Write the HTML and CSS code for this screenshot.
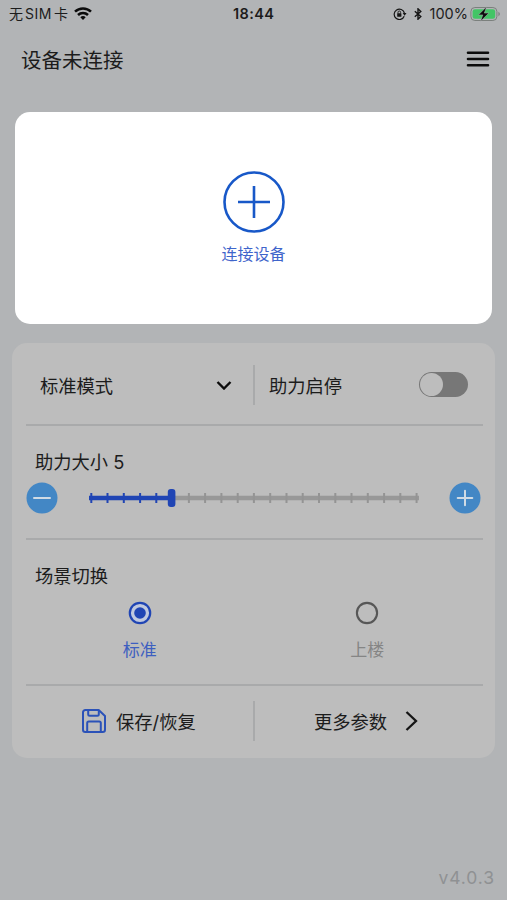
FILE: index.html
```html
<!DOCTYPE html>
<html lang="zh-CN">
  <head>
    <meta charset="UTF-8" />
    <meta name="viewport" content="width=device-width, initial-scale=1.0" />
    <title>设备未连接</title>
    <link rel="stylesheet" href="styles.css">
  </head>

  <body>
    <!-- Status bar -->
    <div class="status">
      <div class="status-left">
        <span class="carrier">无<span class="sim">SIM</span>卡</span>
        <svg class="wifi" width="18" height="13" viewBox="0 0 18 13" fill="none" stroke="#0b0b0b" stroke-width="2.5">
          <path d="M1 4.7a11.5 11.5 0 0 1 16 0" />
          <path d="M4 8a7.2 7.2 0 0 1 10 0" />
          <path d="M9 13L6.3 10.2a3.9 3.9 0 0 1 5.4 0z" fill="#0b0b0b" stroke="none" />
        </svg>
      </div>
      <span class="clock">18:44</span>
      <div class="status-right">
        <svg width="14" height="12" viewBox="0 0 14 12" fill="none" stroke="#151515" stroke-width="1.2">
          <path d="M11.2 8.2A5.2 5.2 0 1 1 11.4 5" />
          <path d="M9.7 5h3.8l-1.9 2.7z" fill="#151515" stroke="none" />
          <rect x="4.2" y="5.3" width="4.2" height="3.4" rx="0.5" fill="#151515" stroke="none" />
          <path d="M5 5.5V4.3a1.3 1.3 0 0 1 2.6 0v1.2" stroke-width="0.9" />
        </svg>
        <svg class="bluetooth" width="8" height="12" viewBox="0 0 8 12" fill="none" stroke="#151515" stroke-width="1.4">
          <path d="M0.8 3.2l6 5.4L4 11.2V0.8l2.8 2.6-6 5.4" />
        </svg>
        <span class="percent">100%</span>
        <svg class="battery" width="31" height="16" viewBox="0 0 31 16">
          <rect x="0.9" y="1.5" width="26" height="13" rx="4" fill="none" stroke="#7b807d" />
          <rect x="2.6" y="3.2" width="22.6" height="9.6" rx="2.4" fill="#42c565" />
          <path d="M28.4 5.8v4.400c2-.8 2-3.600 0-4.400z" fill="#7b807d" />
          <path d="M16.600 0.800L8.400 8.900h4.400l-2.200 6.300 8.200-8.100h-4.500z" fill="#0b0b0b" stroke="#b2b4b6" stroke-width="0.5" />
        </svg>
      </div>
    </div>

    <!-- Page header -->
    <div class="header">
      <h1>设备未连接</h1>
      <svg width="24" height="16" viewBox="0 0 24 16" stroke="#0c0c0c" stroke-width="2.6" stroke-linecap="round">
        <path d="M2 1.8h20M2 8h20M2 14.2h20" />
      </svg>
    </div>

    <!-- Connect card -->
    <div class="connect">
      <svg width="64" height="64" viewBox="0 0 64 64" fill="none" stroke="#1858c8" stroke-width="2.6">
        <circle cx="32" cy="32" r="29.5" />
        <path d="M32 16v32M16 32h32" />
      </svg>
      <span>连接设备</span>
    </div>

    <!-- Control panel -->
    <div class="panel">
      <div class="row mode">
        <div class="mode-select">
          <span>标准模式</span>
          <svg width="16" height="10" viewBox="0 0 16 10" fill="none" stroke="#0c0c0c" stroke-width="2.4">
            <path d="M1.500 2L8 8.500l6.500-6.500" />
          </svg>
        </div>
        <div class="mode-switch">
          <span>助力启停</span>
          <div class="switch"><div class="knob"></div></div>
        </div>
      </div>

      <div class="row power">
        <span class="label">助力大小 5</span>
        <div class="power-bar">
          <svg width="32" height="32" viewBox="0 0 32 32" stroke="#d0dbe5" stroke-width="2" stroke-linecap="round">
            <circle cx="16" cy="16" r="15.5" fill="#4387c5" stroke="none" />
            <path d="M8 16h16" />
          </svg>
          <svg width="332" height="20" viewBox="0 0 332 20">
            <path d="M84 10h247" stroke="#989898" stroke-width="4.4" />
            <path d="M100.9 5v10M117.1 5v10M133.4 5v10M149.7 5v10M165.9 5v10M182.2 5v10M198.5 5v10M214.7 5v10M231 5v10M247.3 5v10M263.5 5v10M279.8 5v10M296.1 5v10M312.3 5v10M328.6 5v10" stroke="#949494" stroke-width="2" />
            <path d="M1 10h83" stroke="#2045b4" stroke-width="4.4" />
            <path d="M3.3 5v10M19.5 5v10M35.8 5v10M52.1 5v10M68.3 5v10" stroke="#2045b4" stroke-width="2" />
            <rect x="79.8" y="1" width="7.6" height="18" rx="3" fill="#2045b4" />
          </svg>
          <svg width="32" height="32" viewBox="0 0 32 32" stroke="#d0dbe5" stroke-width="2" stroke-linecap="round">
            <circle cx="16" cy="16" r="15.5" fill="#4387c5" stroke="none" />
            <path d="M8.7 16h14.6M16 8.7v14.6" />
          </svg>
        </div>
      </div>

      <div class="row scene">
        <span class="label">场景切换</span>
        <div class="scene-list">
          <div class="scene-item active">
            <svg width="24" height="24" viewBox="0 0 24 24">
              <circle cx="12" cy="12" r="10.2" fill="#c0c9df" stroke="#2045b4" stroke-width="2.2" />
              <circle cx="12" cy="12" r="5.8" fill="#2045b4" />
            </svg>
            <span>标准</span>
          </div>
          <div class="scene-item">
            <svg width="24" height="24" viewBox="0 0 24 24">
              <circle cx="12" cy="12" r="10.1" fill="none" stroke="#575757" stroke-width="2.1" />
            </svg>
            <span>上楼</span>
          </div>
        </div>
      </div>

      <div class="row actions">
        <div class="save">
          <svg width="26" height="26" viewBox="0 0 26 26" fill="none" stroke="#2b52b8" stroke-width="2" stroke-linejoin="round">
            <path d="M4.3 2h13.4L24 8v13.7a2.3 2.3 0 0 1-2.3 2.3H4.3A2.3 2.3 0 0 1 2 21.7V4.3A2.3 2.3 0 0 1 4.3 2z" />
            <path d="M7.2 2v4.2a1.500 1.500 0 0 0 1.500 1.500h7.600a1.500 1.500 0 0 0 1.500-1.500V2" />
            <path d="M6.200 24v-9a1.500 1.500 0 0 1 1.500-1.500h10.600a1.500 1.500 0 0 1 1.500 1.500v9" />
          </svg>
          <span>保存/恢复</span>
        </div>
        <div class="more">
          <span>更多参数</span>
          <svg width="13" height="20" viewBox="0 0 13 20" fill="none" stroke="#151515" stroke-width="2.3">
            <path d="M1.500 1L11 10l-9.500 9" />
          </svg>
        </div>
      </div>
    </div>

    <div class="version">v4.0.3</div>
  </body>
</html>
```

FILE: styles.css
```css
* {
  margin: 0;
  padding: 0;
  box-sizing: border-box;
}

body {
  height: 900px;
  background-color: #b2b4b6;
  color: #1c1c1c;
  font-family: Inter, "Noto Sans CJK SC", sans-serif;
  font-size: 18.3px;
  display: flex;
  flex-direction: column;
  overflow: hidden;
}

svg {
  display: block;
  flex-shrink: 0;
}

span {
  white-space: nowrap;
}

.status {
  height: 28px;
  padding: 0 6px 0 9px;
  display: grid;
  grid-template-columns: 224px auto 1fr;
  align-items: center;
  font-size: 14.5px;
  line-height: 20px;
}

.status-left,
.status-right {
  display: flex;
  align-items: center;
}

.status-right {
  justify-content: flex-end;
}

.carrier {
  font-size: 14px;
}

.sim {
  margin: 0 2px;
  letter-spacing: 0.5px;
}

.wifi {
  margin: 0 0 2px 6px;
}

.clock {
  font-weight: 600;
  font-size: 14.5px;
  letter-spacing: 0.4px;
}

.bluetooth {
  margin: 0 8px 0 7px;
}

.battery {
  margin-left: 2px;
}

.header {
  height: 62px;
  padding: 0 17px 0 21px;
  display: flex;
  align-items: center;
  justify-content: space-between;
}

.header h1 {
  font-size: 20.5px;
  font-weight: 400;
}

.connect {
  height: 212px;
  margin: 22px 15px 0;
  padding-top: 58px;
  border-radius: 15px;
  background-color: #ffffff;
  display: flex;
  flex-direction: column;
  align-items: center;
  gap: 8px;
  color: #3f65cb;
  font-size: 16px;
  line-height: 24px;
}

.panel {
  height: 415px;
  margin: 19px 12px 0;
  padding: 0 12px 0 14px;
  border-radius: 15px;
  background-color: #bdbdbd;
}

.row {
  border-bottom: 2px solid #a9aaab;
}

.mode {
  height: 83px;
  padding-top: 2px;
  display: flex;
  align-items: center;
}

.mode-select,
.mode-switch {
  height: 40px;
  display: flex;
  align-items: center;
  justify-content: space-between;
}

.mode-select {
  width: 229px;
  padding: 0 21px 0 14px;
  border-right: 2px solid #a9aaab;
}

.mode-switch {
  flex: 1;
  padding: 0 15px 0 14px;
}

.switch {
  width: 49px;
  height: 25px;
  padding: 1px;
  border-radius: 13px;
  background-color: #777777;
}

.knob {
  width: 23px;
  height: 23px;
  border-radius: 50%;
  background-color: #bdbdbd;
}

.power {
  height: 114px;
  padding-top: 22px;
}

.label {
  display: block;
  padding-left: 9px;
  line-height: 28px;
}

.power-bar {
  margin-top: 6px;
  padding-right: 2px;
  display: flex;
  align-items: center;
  justify-content: space-between;
}

.scene {
  height: 146px;
  padding-top: 22px;
}

.scene-list {
  margin-top: 11px;
  padding-right: 2px;
  display: flex;
}

.scene-item {
  width: 50%;
  display: flex;
  flex-direction: column;
  align-items: center;
  gap: 13px;
  color: #858585;
  font-size: 17px;
  line-height: 24px;
}

.active {
  color: #3d5fc0;
}

.actions {
  height: 69px;
  border-bottom: none;
  display: flex;
  align-items: center;
}

.save,
.more {
  height: 40px;
  display: flex;
  align-items: center;
}

.save {
  width: 229px;
  padding-left: 55px;
  gap: 9px;
  border-right: 2px solid #a9aaab;
}

.more {
  padding-left: 59px;
  gap: 18px;
}

.version {
  margin: auto 12px 10px auto;
  color: #8f9193;
  font-size: 17.5px;
  line-height: 24px;
  letter-spacing: 0.9px;
}
```
